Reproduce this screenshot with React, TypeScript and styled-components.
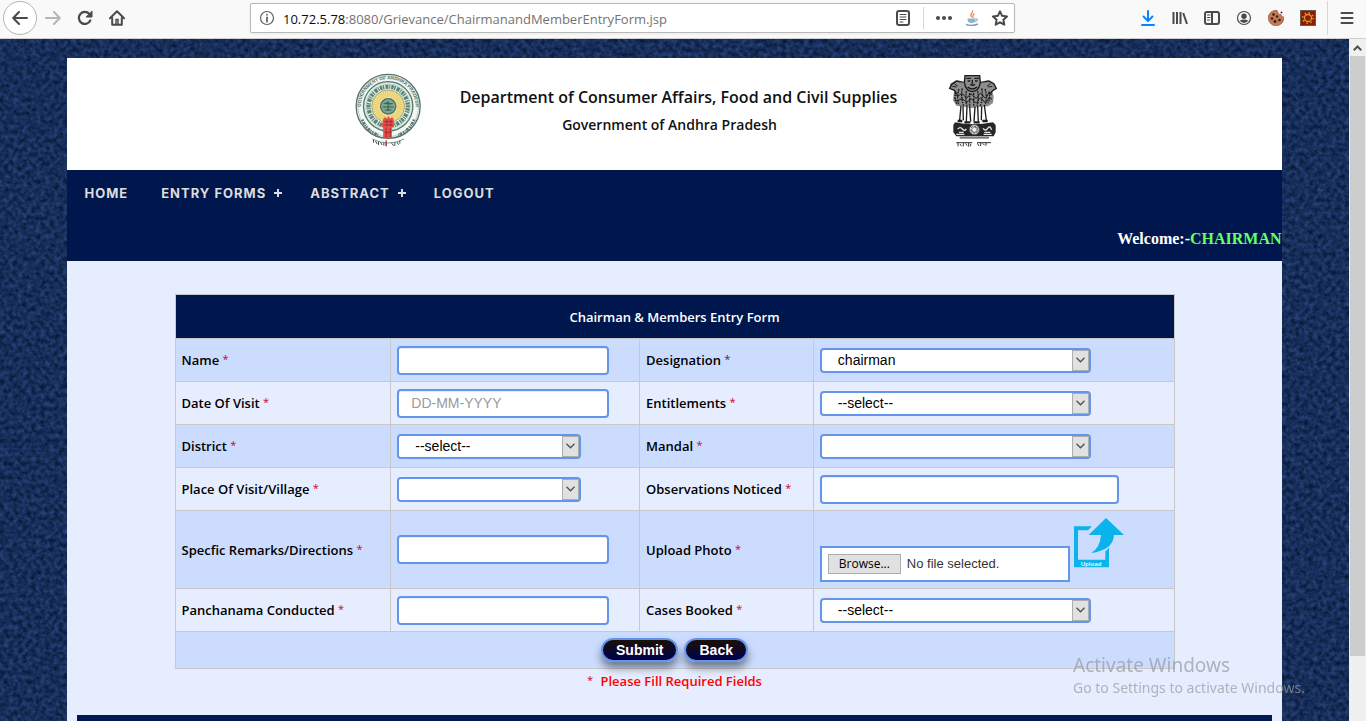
import React from "react";
import styled, { createGlobalStyle } from "styled-components";

const navy = "#00174d";
const sky = "#6495ed";
const line = "#c8c8c8";
const uiFont = '"Open Sans", "Noto Sans", sans-serif';
const fieldFont = '"Liberation Sans", Arial, sans-serif';

const GlobalStyle = createGlobalStyle`
  *, *::before, *::after { box-sizing: border-box; }
  body { margin: 0; font-family: ${fieldFont}; font-size: 14px; color: #000; }
  button, input, select { font: inherit; margin: 0; }
`;

const Shell = styled.div`
  display: flex;
  flex-direction: column;
  height: 100vh;
  overflow: hidden;
`;

/* Browser toolbar */
const Toolbar = styled.header`
  display: flex;
  align-items: center;
  flex: none;
  height: 39px;
  padding: 0 3px 2px;
  background: #f9f9fa;
  border-bottom: 1px solid #ccd0d0;
`;

const ToolGroup = styled.div`
  display: flex;
  align-items: center;
  flex: none;
`;

const ToolButton = styled.button<{ $round?: boolean }>`
  display: grid;
  place-items: center;
  width: ${(p) => (p.$round ? 34 : 32)}px;
  height: ${(p) => (p.$round ? 34 : 32)}px;
  padding: 0;
  border: ${(p) => (p.$round ? "1px solid #b4b4b4" : "0")};
  border-radius: 50%;
  background: ${(p) => (p.$round ? "#fff" : "transparent")};
`;

const Spacer = styled.div`
  flex: 117;
`;

const UrlBar = styled.div`
  display: flex;
  align-items: center;
  flex: 755;
  min-width: 0;
  height: 30px;
  padding: 0 0 0 8px;
  background: #fff;
  border: 1px solid #b8b8b9;
  border-radius: 2px;
  box-shadow: 0 1px 3px rgba(0, 0, 0, 0.06);
`;

const UrlText = styled.p`
  flex: 1;
  min-width: 0;
  margin: 2px 0 0 8px;
  overflow: hidden;
  white-space: nowrap;
  font: 13px/20px ${uiFont};
  color: #737373;
`;

const UrlHost = styled.span`
  color: #0c0c0d;
`;

const UrlAction = styled.button`
  display: grid;
  place-items: center;
  width: 28px;
  height: 28px;
  padding: 0;
  border: 0;
  background: transparent;
`;

const Rule = styled.i<{ $tall?: boolean }>`
  width: 1px;
  height: ${(p) => (p.$tall ? 34 : 22)}px;
  margin: 0 ${(p) => (p.$tall ? 3 : 6)}px;
  background: #d7d7db;
`;

/* Viewport */
const Viewport = styled.div`
  display: flex;
  flex: 1;
  min-height: 0;
`;

const Page = styled.div`
  position: relative;
  flex: 1;
  min-width: 0;
  padding-top: 19px;
  overflow: hidden;
  background: #17305c;
`;

const Backdrop = styled.svg`
  position: absolute;
  inset: 0;
  width: 100%;
  height: 100%;
`;

const Container = styled.div`
  position: relative;
  width: 90%;
  min-height: 100%;
  margin: 0 auto;
  background: #e6edff;
`;

const Banner = styled.div`
  display: flex;
  justify-content: center;
  height: 112px;
  padding: 14px 0 0 2px;
  background: #fff;
`;

const Titles = styled.div`
  margin: 11px 50px 0 37px;
  text-align: center;
  font-family: ${uiFont};
  color: #111;
`;

const Department = styled.h1`
  margin: 0;
  font-size: 16px;
  line-height: 28px;
  font-weight: 600;
`;

const Government = styled.h2`
  margin: 0;
  padding-right: 18px;
  font-size: 14px;
  line-height: 28px;
  font-weight: 600;
`;

const NavBar = styled.nav`
  display: flex;
  flex-direction: column;
  height: 91px;
  background: ${navy};
`;

const Menu = styled.ul`
  display: flex;
  gap: 28px;
  margin: 0;
  padding: 13px 17px 0;
  list-style: none;
`;

const MenuLink = styled.a<{ $parent?: boolean }>`
  display: flex;
  align-items: center;
  gap: 8px;
  padding-right: ${(p) => (p.$parent ? 0 : 5)}px;
  font: 700 13px/20px "Inter", sans-serif;
  letter-spacing: 1px;
  color: #dddddd;
  text-decoration: none;
`;

const Welcome = styled.p`
  margin: 27px 0 0;
  text-align: right;
  font: 700 16px/18px "Liberation Serif", "Times New Roman", serif;
  color: #fff;
`;

const UserName = styled.span`
  color: #66ff66;
`;

/* Entry form */
const EntryForm = styled.form`
  padding: 33px 20px 0;
`;

const FormTable = styled.table`
  width: 100%;
  max-width: 1000px;
  margin: 0 auto;
  table-layout: fixed;
  border-collapse: collapse;
  font: 600 13px/18px ${uiFont};
`;

const Row = styled.tr<{ $dark?: boolean; $height?: number }>`
  height: ${(p) => p.$height ?? 43}px;
  background: ${(p) => (p.$dark ? "#ccdcff" : "#e6edff")};
`;

const Title = styled.th`
  height: 44px;
  padding: 0;
  border: 1px solid ${line};
  background: ${navy};
  color: #fff;
  font-weight: 600;
`;

const LabelCell = styled.th`
  padding: 0 6px;
  border: 1px solid ${line};
  text-align: left;
  font-weight: 600;
`;

const Cell = styled.td`
  padding: 0 6px;
  border: 1px solid ${line};
`;

const ActionCell = styled.td`
  padding: 0;
  border: 1px solid ${line};
`;

const Star = styled.span<{ $color?: string }>`
  font-size: 11px;
  font-weight: 400;
  line-height: 12px;
  vertical-align: 2px;
  color: ${(p) => p.$color ?? "#d4002a"};
`;

const TextInput = styled.input<{ $wide?: boolean }>`
  display: block;
  width: ${(p) => (p.$wide ? 299 : 212)}px;
  max-width: 100%;
  height: 29px;
  padding: 0 12px;
  border: 2px solid ${sky};
  border-radius: 4px;
  background: #fff;
  box-shadow: inset 0 1px 1px rgba(0, 0, 0, 0.08);
  font: 14px/20px ${fieldFont};

  &::placeholder {
    color: #9a9a9a;
    opacity: 1;
  }
`;

const SelectWrap = styled.div<{ $wide?: boolean }>`
  position: relative;
  width: ${(p) => (p.$wide ? 271 : 184)}px;
  max-width: 100%;
`;

const SelectBox = styled.select`
  display: block;
  width: 100%;
  height: 25px;
  padding: 0 24px 0 16px;
  appearance: none;
  border: 2px solid ${sky};
  border-radius: 4px;
  background: #fff;
  color: #000;
  font: 14px/20px ${fieldFont};
`;

const SelectArrow = styled.span`
  position: absolute;
  top: 2px;
  right: 2px;
  display: grid;
  place-items: center;
  width: 17px;
  height: 21px;
  border: 1px solid #adadad;
  background: #e1e1e1;
  pointer-events: none;
`;

const UploadLine = styled.div`
  display: flex;
  align-items: baseline;
  gap: 4px;

  svg {
    flex: none;
  }
`;

const FileBox = styled.div`
  position: relative;
  display: flex;
  align-items: center;
  width: 250px;
  height: 36px;
  padding: 0 6px;
  border: 2px solid ${sky};
  background: #fff;
  font: 13px/18px ${fieldFont};
  color: #333;
`;

const FileInput = styled.input`
  position: absolute;
  inset: 0;
  width: 100%;
  opacity: 0;
`;

const Browse = styled.span`
  width: 73px;
  margin-right: 6px;
  border: 1px solid #adadad;
  background: #e1e1e1;
  text-align: center;
  font: 12px/18px ${uiFont};
  color: #000;
`;

const Actions = styled.div`
  display: flex;
  justify-content: center;
  gap: 6px;
`;

const PillButton = styled.button`
  height: 24px;
  padding: 0 13px;
  border: 2px solid ${sky};
  border-radius: 12px;
  background: linear-gradient(#1a1005, #00004d);
  box-shadow: 0 6px 9px rgba(0, 0, 0, 0.45);
  color: #fff;
  font: 700 14px/18px ${fieldFont};
`;

const Note = styled.p`
  margin: 3px 0 25px;
  text-align: center;
  font: 600 13px/18px ${uiFont};
  color: #f00;
`;

const NoteText = styled.span`
  margin-left: 4px;
`;

const Footer = styled.footer`
  height: 40px;
  margin: 0 10px;
  background: linear-gradient(#001a55, #000d33);
`;

/* Scroll bar */
const ScrollTrack = styled.div`
  display: flex;
  flex-direction: column;
  flex: none;
  width: 17px;
  padding: 0 1px;
  background: #f0f0f0;
`;

const ScrollUp = styled.div`
  display: grid;
  place-items: center;
  height: 17px;
`;

const Thumb = styled.div`
  flex: 600;
  background: #cdcdcd;
`;

const TrackRest = styled.div`
  flex: 65;
`;

const Watermark = styled.aside`
  position: fixed;
  right: 57px;
  bottom: 23px;
  width: 236px;
  white-space: nowrap;
  font: 14px/20px "Noto Sans", sans-serif;
  color: rgba(150, 152, 158, 0.7);
  pointer-events: none;
`;

const WatermarkTitle = styled.div`
  font-size: 19px;
  line-height: 26px;
`;

type IconProps = { children: React.ReactNode; color?: string };
const Icon = ({ children, color = "#4a4a4d" }: IconProps) => (
  <svg width={16} height={16} viewBox="0 0 16 16" fill="none" stroke={color} strokeWidth="2" strokeLinecap="round" strokeLinejoin="round" aria-hidden="true">
    {children}
  </svg>
);

const Plus = () => (
  <svg width="8" height="8" viewBox="0 0 8 8" aria-hidden="true">
    <path d="M4 0v8M0 4h8" stroke="#ddd" strokeWidth="2" />
  </svg>
);

const StateSeal = () => (
  <svg width="69" height="75" viewBox="40 35 206 225" role="img" aria-label="Government of Andhra Pradesh seal">
    <defs>
      <path id="sealTop" d="M67 172A82 82 0 1 1 217 172" />
    </defs>
    <circle cx="142" cy="138" r="96" fill="#f4f8f5" stroke="#587068" strokeWidth="4" />
    <circle cx="142" cy="138" r="91" fill="none" stroke="#9fb5aa" strokeWidth="2" />
    <text fontFamily="Liberation Sans, sans-serif" fontSize="14" fontWeight="700" fill="#4d7266" textAnchor="middle">
      <textPath href="#sealTop" startOffset="50%">GOVERNMENT OF ANDHRA PRADESH</textPath>
    </text>
    <path d="M64 178c8 20 24 38 48 46M220 178c-8 20-24 38-48 46" stroke="#5d7d72" strokeWidth="9" strokeDasharray="5 3 8 2 3 3" fill="none" />
    <circle cx="142" cy="138" r="74" fill="#dcebe3" stroke="#56786c" strokeWidth="4" />
    <circle cx="142" cy="138" r="59" fill="none" stroke="#5c8072" strokeWidth="13" strokeDasharray="3 3 7 2 4 4 9 3" />
    <circle cx="142" cy="138" r="66" fill="none" stroke="#a9c9b9" strokeWidth="3" strokeDasharray="9 5" />
    <circle cx="142" cy="138" r="49" fill="#f2df92" stroke="#9fa878" strokeWidth="3" />
    <circle cx="142" cy="138" r="37" fill="none" stroke="#e2c766" strokeWidth="18" strokeDasharray="2 3" />
    <circle cx="142" cy="138" r="23" fill="#7fa894" stroke="#4a7160" strokeWidth="4" />
    <path d="M128 130h28M126 140h32M132 149h20M142 122v30M134 126l16 6" stroke="#34614f" strokeWidth="3" />
    <path d="M127 176l6-6 5 5 5-8 5 8 6-5 5 8v22h-6v34h-26v-34h-4z" fill="#e0504c" />
    <path d="M130 184h28M128 194h30M136 204v26M148 204v26M132 216h20M138 178v20M150 178v20" stroke="#a82028" strokeWidth="3" strokeDasharray="5 2" />
    <path d="M94 236q24 12 48 12t48-12" stroke="#365" strokeWidth="2" fill="none" />
    <path d="M98 238v9m6-5l5 9m4-8v11m6-8l5 8m5-8v10m7-10v12m16-10l6 8m4-10v11m6-12l5 8m4-12v9" stroke="#3d4f48" strokeWidth="3" fill="none" />
    <path d="M136 240v17" stroke="#c8383c" strokeWidth="4" />
  </svg>
);

const LionEmblem = () => (
  <svg width="50" height="76" viewBox="800 35 150 228" role="img" aria-label="State emblem of India">
    <path d="M854 46h44l2 18 6 4 22-8 16 10 4 14-12 8 4 16-2 20-14 10-26 2-22 3-22-3-26-4-10-16 2-22 2-8-14-8 2-12 16-10 22 8 6-4z" fill="#8d8d8d" />
    <g fill="none" stroke="#1b1b1b" strokeWidth="3">
      <path d="M854 46h44l2 20q-4 26-24 28q-20-2-24-28z" strokeWidth="4" />
      <path d="M858 54h14M882 54h14M862 62h8M884 62h8M870 72q7 6 14 0M862 80q14 12 28 0M876 58v14" strokeWidth="4" />
      <path d="M850 66l-20-4-16 10-6 12 14 6 8 12M902 66l22-4 16 8 8 14-12 8-8 10" strokeWidth="4" />
      <path d="M816 78l12 2M822 70l10 8M936 78l-12 2M930 70l-10 8" />
      <path d="M826 94q-6 20 4 36M836 86q-8 24 0 48M846 84q-6 26 4 52M858 92q-4 24 2 46M868 98v38M880 98v38M892 92q4 24-2 46M904 84q6 26-4 52M914 86q8 24 0 48M926 94q6 20-4 34" strokeDasharray="7 2 4 3" strokeWidth="4" />
      <path d="M824 104q8 8 14 0t14 2 14 0 14 2 14-2 14 0 14-2 12 0M824 118q8 8 14 0t14 2 14 0 14 2 14-2 14 0 14-2 12 0" />
      <path d="M842 136l-4 44M848 138l1 42M860 138l-2 46M868 138l3 46M884 138l-3 46M892 138l2 46M904 138l-1 42M912 134l6 46" strokeWidth="4" />
      <path d="M832 182h14M852 186h18M880 186h18M906 182h16" strokeWidth="7" />
    </g>
    <path d="M824 186q52 12 114 0l8 8v22l-6 12H828l-9-12v-22z" fill="#262626" />
    <circle cx="882" cy="208" r="15" fill="#eee" stroke="#555" strokeWidth="3" />
    <circle cx="882" cy="208" r="9" fill="none" stroke="#333" strokeWidth="6" strokeDasharray="2 2" />
    <path d="M832 206q8-8 14 0t12 0M836 216h14M908 204q8 10 14 0t12 4M912 216h18M828 222h24M910 222h24" stroke="#e4e4e4" strokeWidth="4" fill="none" />
    <path d="M838 232h88" stroke="#777" strokeWidth="6" />
    <path d="M828 247h48M890 247h42" stroke="#333" strokeWidth="3" />
    <path d="M833 247v11m6-7l5 7m5-10v10m7-9l4 7m5-8v11m6-9v8m20-9l5 8m5-9v9m6-8l6 6m4-9v10" stroke="#333" strokeWidth="3" fill="none" />
  </svg>
);

const UploadIcon = () => (
  <svg width="50" height="50" viewBox="0 0 150 150" role="img" aria-label="Upload">
    <path d="M0 25h54l-12 12H12v88h82V100q7-4 11-12v60H0z" fill="#0ab4ea" />
    <path d="M96 0l54 51h-30q-3 46-69 54q27-14 30-54H44z" fill="#0ab4ea" />
    <text x="20" y="143" fontFamily="Open Sans, sans-serif" fontSize="18" fontWeight="600" fill="#fff">Upload</text>
  </svg>
);

type SelectProps = { id: string; options: string[]; wide?: boolean };
const Select = ({ id, options, wide }: SelectProps) => (
  <SelectWrap $wide={wide}>
    <SelectBox id={id} name={id}>
      {options.map((o) => (
        <option key={o}>{o}</option>
      ))}
    </SelectBox>
    <SelectArrow>
      <svg width="9" height="6" viewBox="0 0 9 6" fill="none" stroke="#505050" strokeWidth="1.3" aria-hidden="true">
        <path d="M.5 .8l4 4 4-4" />
      </svg>
    </SelectArrow>
  </SelectWrap>
);

type LabelProps = { id: string; text: string; star?: string };
const FieldLabel = ({ id, text, star }: LabelProps) => (
  <LabelCell scope="row">
    <label htmlFor={id}>
      {text} <Star $color={star}>*</Star>
    </label>
  </LabelCell>
);

const BrowserBar = () => (
  <Toolbar>
    <ToolGroup>
      <ToolButton $round aria-label="Back">
        <Icon><path d="M15 8H1.5M7 2L1.2 8l5.8 6" /></Icon>
      </ToolButton>
      <ToolButton aria-label="Forward">
        <Icon color="#b5b5b7"><path d="M1 8h13.5M9 2l5.8 6L9 14" /></Icon>
      </ToolButton>
      <ToolButton aria-label="Reload">
        <Icon>
          <path d="M13.3 10.5A6 6 0 1 1 12.4 4" strokeWidth="2.2" />
          <path d="M15 1.5V7H9.5z" fill="#4a4a4d" strokeWidth="1" />
        </Icon>
      </ToolButton>
      <ToolButton aria-label="Home">
        <Icon>
          <path d="M1 8.2L8 1.3l7 6.9M3.2 8v6.8h9.6V8" />
          <path d="M7 14V9.5h2V14" strokeWidth="1.5" />
        </Icon>
      </ToolButton>
    </ToolGroup>
    <Spacer />
    <UrlBar>
      <Icon color="#5f5f62">
        <circle cx="8" cy="8" r="6.5" strokeWidth="1.2" />
        <path d="M8 7.5v4M8 4.6v.2" strokeWidth="1.8" />
      </Icon>
      <UrlText>
        <UrlHost>10.72.5.78</UrlHost>:8080/Grievance/ChairmanandMemberEntryForm.jsp
      </UrlText>
      <UrlAction aria-label="Reader view">
        <Icon>
          <rect x="2" y="1" width="12" height="14" rx="2" />
          <path d="M5 4.5h6M5 7h6M5 9.5h6M5 12h3" strokeWidth="1" />
        </Icon>
      </UrlAction>
      <Rule />
      <UrlAction aria-label="Page actions">
        <svg width="18" height="6" viewBox="0 0 18 6" fill="#4a4a4d" aria-hidden="true">
          <circle cx="3" cy="3" r="2" />
          <circle cx="9" cy="3" r="2" />
          <circle cx="15" cy="3" r="2" />
        </svg>
      </UrlAction>
      <UrlAction aria-label="Java">
        <svg width="16" height="16" viewBox="0 0 16 16" fill="none" aria-hidden="true">
          <path d="M8.5 .5c1.5 2-3.5 3.3-1 6.5M10.5 3.5C7.5 5 10 6 8.5 8" stroke="#ec8a4b" strokeWidth="1.3" />
          <path d="M3.5 8.5h8c0 3-1 4.5-4 4.5s-4-1.5-4-4.5z" fill="#8fb1cb" />
          <path d="M11.5 9c3-.8 2.5 2.3-.5 2.5" stroke="#7d9fbd" />
          <path d="M2 14.5q6 2 12-.5" stroke="#7d9fbd" strokeWidth="1.4" />
        </svg>
      </UrlAction>
      <UrlAction aria-label="Bookmark">
        <Icon><path d="M8 1.3l2.1 4.5 4.9.6-3.6 3.4.9 4.9L8 12.3l-4.3 2.4.9-4.9L1 6.4l4.9-.6z" /></Icon>
      </UrlAction>
    </UrlBar>
    <Spacer />
    <ToolGroup>
      <ToolButton aria-label="Downloads">
        <Icon color="#0a84ff"><path d="M8 1v9.5M3.5 6.5L8 11l4.5-4.5M2 15h12" /></Icon>
      </ToolButton>
      <ToolButton aria-label="Library">
        <Icon><path d="M1.5 2v12M5 2v12M8.5 2v12M11.2 3l3.8 11" strokeLinecap="butt" /></Icon>
      </ToolButton>
      <ToolButton aria-label="Sidebars">
        <Icon>
          <rect x="1" y="2" width="14" height="12" rx="2" />
          <path d="M8 2v12" />
          <path d="M3.5 5h2.5M3.5 7.5h2.5M3.5 10h2" strokeWidth="1" />
        </Icon>
      </ToolButton>
      <ToolButton aria-label="Account">
        <Icon>
          <circle cx="8" cy="8" r="6.5" strokeWidth="1.2" />
          <circle cx="8" cy="6.2" r="2.7" fill="#4a4a4d" strokeWidth="0" />
          <path d="M3.6 10.8q4.4-2.6 8.8 0Q8 15 3.6 10.8z" fill="#4a4a4d" strokeWidth="0" />
        </Icon>
      </ToolButton>
      <ToolButton aria-label="Cookies">
        <svg width="16" height="16" viewBox="0 0 16 16" aria-hidden="true">
          <path d="M9 .3A7.8 7.8 0 1 0 15.8 7l-2-.5-.8-2-2.5-.3z" fill="#c47a54" stroke="#8a4f33" strokeWidth=".6" />
          <g fill="#3a1d14">
            <circle cx="5.5" cy="4.5" r="1.3" />
            <circle cx="9" cy="6.5" r="1.2" />
            <circle cx="4" cy="8.5" r="1.2" />
            <circle cx="7" cy="11.5" r="1.4" />
            <circle cx="11.5" cy="10" r="1.3" />
            <circle cx="13.5" cy="2.5" r=".9" />
          </g>
        </svg>
      </ToolButton>
      <ToolButton aria-label="Extension">
        <svg width="16" height="16" viewBox="0 0 16 16" fill="none" aria-hidden="true">
          <rect x=".5" y=".5" width="15" height="15" fill="#8c1d04" stroke="#6d5a50" />
          <circle cx="8" cy="8" r="3.5" stroke="#dc9a35" strokeWidth="1.3" />
          <circle cx="8" cy="8" r="5.2" stroke="#dc9a35" strokeWidth="1.6" strokeDasharray="1.4 2.68" />
        </svg>
      </ToolButton>
      <Rule $tall />
      <ToolButton aria-label="Menu">
        <Icon><path d="M2.5 3h11M2.5 8h11M2.5 13h11" /></Icon>
      </ToolButton>
    </ToolGroup>
  </Toolbar>
);

const menu = [
  { label: "HOME" },
  { label: "ENTRY FORMS", parent: true },
  { label: "ABSTRACT", parent: true },
  { label: "LOGOUT" },
];

export default function App() {
  return (
    <Shell>
      <GlobalStyle />
      <BrowserBar />
      <Viewport>
        <Page>
          <Backdrop aria-hidden="true">
            <filter id="denim" x="0" y="0" width="100%" height="100%" colorInterpolationFilters="sRGB">
              <feTurbulence type="fractalNoise" baseFrequency="0.22" numOctaves="3" seed="7" />
              <feColorMatrix values="0.18 0 0 0 0  0.26 0 0 0 0.05  0.42 0 0 0 0.14  0 0 0 0 1" />
            </filter>
            <rect width="100%" height="100%" filter="url(#denim)" />
          </Backdrop>
          <Container>
            <Banner>
              <StateSeal />
              <Titles>
                <Department>Department of Consumer Affairs, Food and Civil Supplies</Department>
                <Government>Government of Andhra Pradesh</Government>
              </Titles>
              <LionEmblem />
            </Banner>
            <NavBar>
              <Menu>
                {menu.map((m) => (
                  <li key={m.label}>
                    <MenuLink href="#" $parent={m.parent}>
                      {m.label}
                      {m.parent && <Plus />}
                    </MenuLink>
                  </li>
                ))}
              </Menu>
              <Welcome>
                Welcome:-<UserName>CHAIRMAN</UserName>
              </Welcome>
            </NavBar>
            <EntryForm onSubmit={(e) => e.preventDefault()}>
              <FormTable>
                <colgroup>
                  <col width="21.6%" />
                  <col width="24.9%" />
                  <col width="17.4%" />
                  <col width="36.1%" />
                </colgroup>
                <thead>
                  <tr>
                    <Title colSpan={4}>Chairman &amp; Members Entry Form</Title>
                  </tr>
                </thead>
                <tbody>
                  <Row $dark>
                    <FieldLabel id="name" text="Name" />
                    <Cell><TextInput id="name" /></Cell>
                    <FieldLabel id="designation" text="Designation" star="#333366" />
                    <Cell><Select wide id="designation" options={["chairman"]} /></Cell>
                  </Row>
                  <Row>
                    <FieldLabel id="date" text="Date Of Visit" />
                    <Cell><TextInput id="date" placeholder="DD-MM-YYYY" /></Cell>
                    <FieldLabel id="entitlements" text="Entitlements" />
                    <Cell><Select wide id="entitlements" options={["--select--"]} /></Cell>
                  </Row>
                  <Row $dark>
                    <FieldLabel id="district" text="District" />
                    <Cell><Select id="district" options={["--select--"]} /></Cell>
                    <FieldLabel id="mandal" text="Mandal" />
                    <Cell><Select wide id="mandal" options={[""]} /></Cell>
                  </Row>
                  <Row>
                    <FieldLabel id="village" text="Place Of Visit/Village" />
                    <Cell><Select id="village" options={[""]} /></Cell>
                    <FieldLabel id="observations" text="Observations Noticed" />
                    <Cell><TextInput $wide id="observations" /></Cell>
                  </Row>
                  <Row $dark $height={78}>
                    <FieldLabel id="remarks" text="Specfic Remarks/Directions" />
                    <Cell><TextInput id="remarks" /></Cell>
                    <FieldLabel id="photo" text="Upload Photo" />
                    <Cell>
                      <UploadLine>
                        <FileBox>
                          <Browse>Browse...</Browse>
                          <span>No file selected.</span>
                          <FileInput type="file" id="photo" />
                        </FileBox>
                        <UploadIcon />
                      </UploadLine>
                    </Cell>
                  </Row>
                  <Row>
                    <FieldLabel id="panchanama" text="Panchanama Conducted" />
                    <Cell><TextInput id="panchanama" /></Cell>
                    <FieldLabel id="cases" text="Cases Booked" />
                    <Cell><Select wide id="cases" options={["--select--"]} /></Cell>
                  </Row>
                  <Row $dark $height={37}>
                    <ActionCell colSpan={4}>
                      <Actions>
                        <PillButton type="submit">Submit</PillButton>
                        <PillButton type="button">Back</PillButton>
                      </Actions>
                    </ActionCell>
                  </Row>
                </tbody>
              </FormTable>
              <Note>
                <Star>*</Star> <NoteText>Please Fill Required Fields</NoteText>
              </Note>
            </EntryForm>
            <Footer />
          </Container>
        </Page>
        <ScrollTrack>
          <ScrollUp>
            <svg width="9" height="6" viewBox="0 0 9 6" fill="none" stroke="#505050" strokeWidth="2" aria-hidden="true">
              <path d="M.8 5.2l3.7-3.7 3.7 3.7" />
            </svg>
          </ScrollUp>
          <Thumb />
          <TrackRest />
        </ScrollTrack>
      </Viewport>
      <Watermark>
        <WatermarkTitle>Activate Windows</WatermarkTitle>
        Go to Settings to activate Windows.
      </Watermark>
    </Shell>
  );
}
